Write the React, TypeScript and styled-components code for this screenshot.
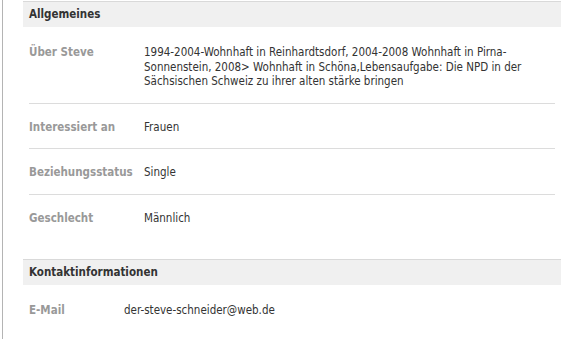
import React from 'react';
import styled, { createGlobalStyle } from 'styled-components';

const GlobalStyle = createGlobalStyle`
  html, body {
    margin: 0;
    padding: 0;
    background: #fff;
  }

  body {
    font-family: "DejaVu Sans Condensed", "DejaVu Sans", "Liberation Sans", sans-serif;
    font-stretch: condensed;
    font-size: 11.5px;
    color: #333;
  }
`;

type Entry = {
  label: string;
  value: string;
};

const general: Entry[] = [
  {
    label: 'Über Steve',
    value:
      '1994-2004-Wohnhaft in Reinhardtsdorf, 2004-2008 Wohnhaft in Pirna-Sonnenstein, 2008> Wohnhaft in Schöna,Lebensaufgabe: Die NPD in der Sächsischen Schweiz zu ihrer alten stärke bringen',
  },
  { label: 'Interessiert an', value: 'Frauen' },
  { label: 'Beziehungsstatus', value: 'Single' },
  { label: 'Geschlecht', value: 'Männlich' },
];

const contact: Entry[] = [
  { label: 'E-Mail', value: 'der-steve-schneider@web.de' },
];

const InfoSection: React.FC<{ title: string; items: Entry[]; labelWidth: number }> = ({
  title,
  items,
  labelWidth,
}) => (
  <Section>
    <SectionHeader>{title}</SectionHeader>
    <List>
      {items.map((item) => (
        <Row key={item.label} $labelWidth={labelWidth}>
          <Label>{item.label}</Label>
          <Value>{item.value}</Value>
        </Row>
      ))}
    </List>
  </Section>
);

const App: React.FC = () => (
  <>
    <GlobalStyle />
    <Page>
      <Frame>
        <InfoSection title="Allgemeines" items={general} labelWidth={115} />
        <InfoSection title="Kontaktinformationen" items={contact} labelWidth={95} />
      </Frame>
    </Page>
  </>
);

const Page = styled.div`
  padding-left: 2px;
  min-height: 100vh;
  box-sizing: border-box;
`;

const Frame = styled.div`
  min-height: 100vh;
  padding: 1px 0 0 20px;
  border-left: 1px solid #b4b4b4;
  box-sizing: border-box;
`;

const Section = styled.section`
  & + & {
    margin-top: 20px;
  }
`;

const SectionHeader = styled.h3`
  margin: 0;
  height: 25px;
  padding: 0 6px;
  border-top: 1px solid #d9d9d9;
  background: #f0f0f0;
  font-size: 11.5px;
  font-weight: bold;
  line-height: 25px;
  color: #333;
`;

const List = styled.ul`
  margin: 0 6px;
  padding: 2px 0 0;
  list-style: none;
`;

const Row = styled.li<{ $labelWidth: number }>`
  display: grid;
  grid-template-columns: ${({ $labelWidth }) => $labelWidth}px 1fr;
  padding: 16px 0 14px;
  line-height: 14.5px;

  & + & {
    border-top: 1px solid #dcdcdc;
  }
`;

const Label = styled.div`
  font-weight: bold;
  color: #999;
  white-space: nowrap;
`;

const Value = styled.div`
  color: #333;
`;

export default App;
